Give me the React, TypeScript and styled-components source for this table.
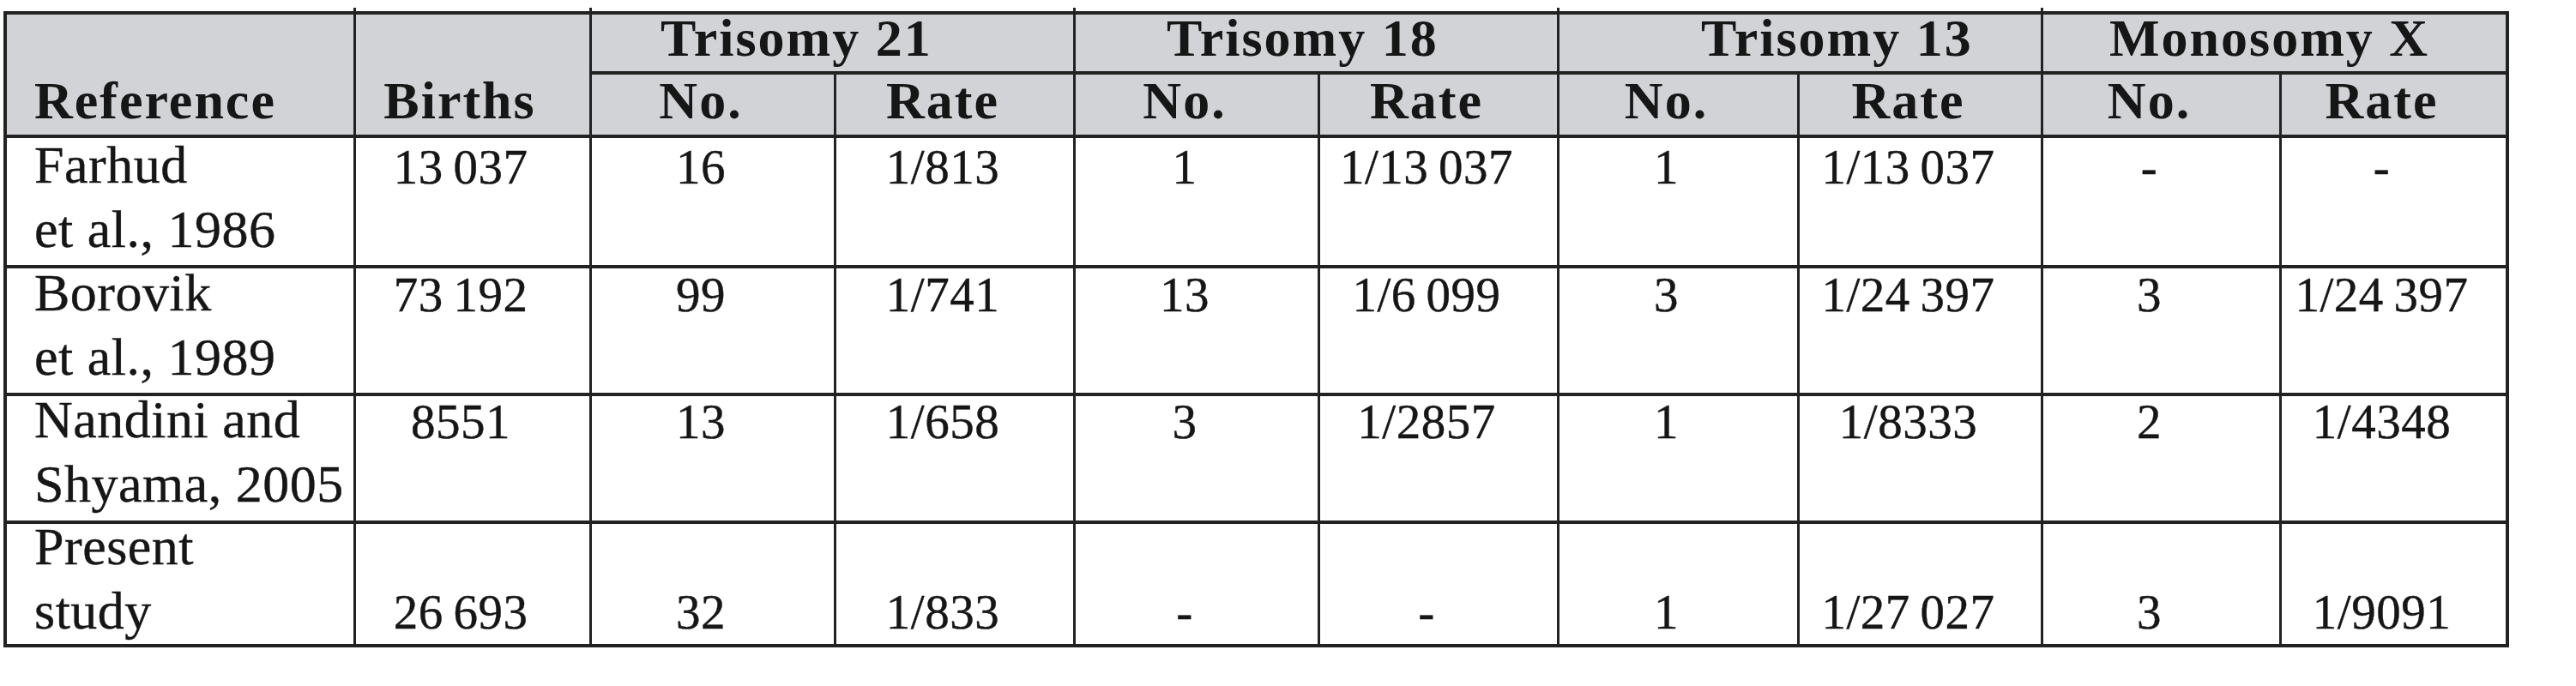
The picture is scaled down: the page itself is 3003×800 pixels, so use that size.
import React from 'react';
import styled, { createGlobalStyle, css } from 'styled-components';

const LINE = '#222222';
const HEAD_BG = '#d1d3d7';

const GlobalStyle = createGlobalStyle`
  html, body {
    margin: 0;
    padding: 0;
    background: #ffffff;
  }
`;

type Row = {
  ref: string[];
  values: string[];
  shift: number;
  bottom?: boolean;
};

const groups = [
  { title: 'Trisomy 21', indent: 80 },
  { title: 'Trisomy 18', indent: 106 },
  { title: 'Trisomy 13', indent: 165 },
  { title: 'Monosomy X', indent: 77 },
];

const rows: Row[] = [
  {
    ref: ['Farhud', 'et al., 1986'],
    values: ['13 037', '16', '1/813', '1', '1/13 037', '1', '1/13 037', '-', '-'],
    shift: -6,
  },
  {
    ref: ['Borovik', 'et al., 1989'],
    values: ['73 192', '99', '1/741', '13', '1/6 099', '3', '1/24 397', '3', '1/24 397'],
    shift: -9,
  },
  {
    ref: ['Nandini and', 'Shyama, 2005'],
    values: ['8551', '13', '1/658', '3', '1/2857', '1', '1/8333', '2', '1/4348'],
    shift: -10,
  },
  {
    ref: ['Present', 'study'],
    values: ['26 693', '32', '1/833', '-', '-', '1', '1/27 027', '3', '1/9091'],
    shift: -11,
    bottom: true,
  },
];

const Sheet = styled.div`
  display: grid;
  grid-template-columns: 404px 272px 282px 276px 282px 276px 277px 281px 275px 261px;
  grid-template-rows: 66px 70px 148px 145px 145px 140px;
  gap: 4px 3px;
  padding: 4px;
  width: max-content;
  margin: 13px 0 0 4px;
  background: ${LINE};
  font-family: "Liberation Serif", "Times New Roman", serif;
  color: #161616;
`;

const topTick = css`
  &::before {
    content: '';
    position: absolute;
    left: -3px;
    top: -8px;
    width: 3px;
    height: 4px;
    background: ${LINE};
  }
`;

const bottomTick = css`
  &::after {
    content: '';
    position: absolute;
    left: -3px;
    bottom: -9px;
    width: 3px;
    height: 5px;
    background: ${LINE};
  }
`;

const HeadBase = styled.div<{ $tick?: boolean }>`
  position: relative;
  display: flex;
  background: ${HEAD_BG};
  font-size: 62px;
  font-weight: 700;
  letter-spacing: 2px;
  white-space: nowrap;
  ${(p) => p.$tick && topTick}
`;

const StubHead = styled(HeadBase)<{ $left?: boolean }>`
  grid-row: span 2;
  align-items: flex-end;
  justify-content: ${(p) => (p.$left ? 'flex-start' : 'center')};
  line-height: 70px;
  padding: ${(p) => (p.$left ? '0 0 5px 32px' : '0 30px 5px 0')};
`;

const GroupHead = styled(HeadBase)<{ $indent: number }>`
  grid-column: span 2;
  align-items: center;
  line-height: 66px;
  padding: 0 0 12px ${(p) => p.$indent}px;
`;

const SubHead = styled(HeadBase)`
  align-items: center;
  justify-content: center;
  line-height: 70px;
  padding: 0 28px 10px 0;
`;

const RefCell = styled.div`
  background: #ffffff;
  padding-left: 32px;
  font-size: 62px;
  line-height: 75px;
  letter-spacing: 0.5px;
  white-space: nowrap;
  -webkit-text-stroke: 0.4px currentColor;
`;

const ValueCell = styled.div<{ $bottom?: boolean }>`
  position: relative;
  display: flex;
  flex-direction: column;
  justify-content: ${(p) => (p.$bottom ? 'flex-end' : 'flex-start')};
  background: #ffffff;
  padding-right: 28px;
  text-align: center;
  font-size: 57px;
  line-height: 75px;
  letter-spacing: 0.5px;
  word-spacing: -3px;
  white-space: nowrap;
  -webkit-text-stroke: 0.4px currentColor;
  ${(p) => p.$bottom && bottomTick}
`;

const Lines = styled.span<{ $shift: number }>`
  display: block;
  margin-top: ${(p) => p.$shift}px;
`;

export default function App() {
  return (
    <>
      <GlobalStyle />
      <Sheet>
        <StubHead $left>Reference</StubHead>
        <StubHead $tick>Births</StubHead>
        {groups.map((g) => (
          <GroupHead key={g.title} $tick $indent={g.indent}>
            {g.title}
          </GroupHead>
        ))}
        {groups.map((g) => (
          <React.Fragment key={g.title + '-sub'}>
            <SubHead>No.</SubHead>
            <SubHead>Rate</SubHead>
          </React.Fragment>
        ))}

        {rows.map((row) => (
          <React.Fragment key={row.ref.join(' ')}>
            <RefCell>
              <Lines $shift={row.shift}>
                {row.ref[0]}
                <br />
                {row.ref[1]}
              </Lines>
            </RefCell>
            {row.values.map((v, i) => (
              <ValueCell key={i} $bottom={row.bottom}>
                <Lines $shift={row.bottom ? 0 : row.shift + 2}>{v}</Lines>
              </ValueCell>
            ))}
          </React.Fragment>
        ))}
      </Sheet>
    </>
  );
}
